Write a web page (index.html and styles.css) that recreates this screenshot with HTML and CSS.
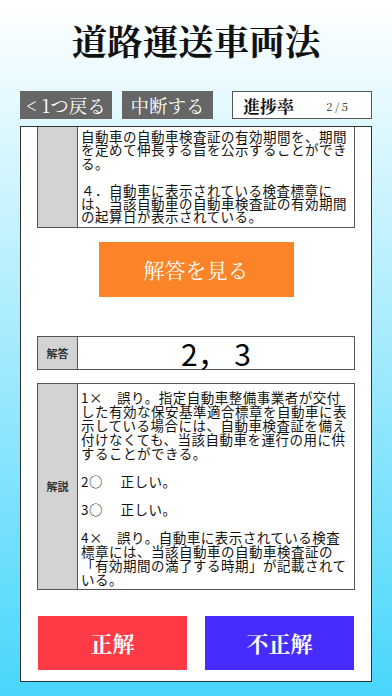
FILE: index.html
```html
<!DOCTYPE html>
<html lang="ja">
<head>
<meta charset="utf-8">
<title>道路運送車両法</title>
<link rel="stylesheet" href="styles.css">
</head>
<body>
<div class="screen">
  <header class="title-bar">
    <h1 class="title">道路運送車両法</h1>
  </header>

  <nav class="toolbar">
    <button class="tool-btn back">&lt; 1つ戻る</button>
    <button class="tool-btn pause">中断する</button>
    <div class="progress">
      <span class="progress-label">進捗率</span>
      <span class="progress-count">2 / 5</span>
    </div>
  </nav>

  <main class="panel">
    <section class="box question">
      <div class="box-label"></div>
      <div class="box-body q-text">
        <div class="ln">自動車の自動車検査証の有効期間を、期間</div>
        <div class="ln">を定めて伸長する旨を公示することができ</div>
        <div class="ln">る。</div>
        <div class="ln"></div>
        <div class="ln">４．自動車に表示されている検査標章に</div>
        <div class="ln">は、当該自動車の自動車検査証の有効期間</div>
        <div class="ln">の起算日が表示されている。</div>
      </div>
    </section>

    <div class="reveal-row">
      <button class="reveal">解答を見る</button>
    </div>

    <section class="box answer">
      <div class="box-label"><span class="label-text">解答</span></div>
      <div class="answer-value">2，&nbsp;3</div>
    </section>

    <section class="box explain">
      <div class="box-label"><span class="label-text">解説</span></div>
      <div class="box-body e-text">
        <div class="ln">1×　誤り。指定自動車整備事業者が交付</div>
        <div class="ln">した有効な保安基準適合標章を自動車に表</div>
        <div class="ln">示している場合には、自動車検査証を備え</div>
        <div class="ln">付けなくても、当該自動車を運行の用に供</div>
        <div class="ln">することができる。</div>
        <div class="ln"></div>
        <div class="ln">2○　 正しい。</div>
        <div class="ln"></div>
        <div class="ln">3○　 正しい。</div>
        <div class="ln"></div>
        <div class="ln">4×　誤り。自動車に表示されている検査</div>
        <div class="ln">標章には、当該自動車の自動車検査証の</div>
        <div class="ln">「有効期間の満了する時期」が記載されて</div>
        <div class="ln">いる。</div>
      </div>
    </section>

    <div class="judge">
      <button class="judge-btn correct">正解</button>
      <button class="judge-btn wrong">不正解</button>
    </div>
  </main>
</div>
</body>
</html>
```

FILE: styles.css
```css
html, body {
  margin: 0;
  padding: 0;
}

body {
  width: 392px;
  height: 696px;
  overflow: hidden;
  background: linear-gradient(180deg, #ffffff 0%, #48d6fb 100%);
  font-family: "Noto Sans CJK JP", "Noto Sans", sans-serif;
  color: #111;
}

.screen {
  display: flex;
  flex-direction: column;
  height: 696px;
}

.title-bar {
  height: 80px;
  display: flex;
  align-items: center;
  justify-content: center;
}

.title {
  margin: 0;
  font-family: "Noto Serif CJK JP", "Noto Serif JP", "Liberation Serif", "Noto Sans CJK JP", serif;
  font-size: 35.5px;
  font-weight: 700;
  line-height: 1;
  color: #111;
}

.toolbar {
  margin-top: 11px;
  height: 28px;
  padding: 0 20px;
  display: flex;
  align-items: stretch;
}

.tool-btn {
  border: 0;
  padding: 0;
  margin: 0;
  background: #666666;
  color: #ffffff;
  font-family: "Noto Serif CJK JP", "Noto Serif JP", "Liberation Serif", "Noto Sans CJK JP", serif;
  font-size: 18.5px;
  line-height: 28px;
  white-space: nowrap;
}

.back {
  width: 92px;
}

.pause {
  width: 91px;
  margin-left: 10px;
}

.progress {
  width: 140px;
  margin-left: 19px;
  box-sizing: border-box;
  border: 1px solid #555;
  background: #fff;
  display: flex;
  align-items: center;
  justify-content: space-between;
  padding: 0 23px 0 10px;
  font-family: "Noto Serif CJK JP", "Noto Serif JP", "Liberation Serif", "Noto Sans CJK JP", serif;
}

.progress-label {
  font-size: 17px;
  font-weight: 700;
  color: #111;
}

.progress-count {
  font-size: 11px;
  color: #222;
  padding-top: 2px;
}

.panel {
  margin: 7px 20px 0;
  height: 556px;
  box-sizing: border-box;
  border: 1px solid #333;
  background: #ffffff;
  overflow: hidden;
  display: flex;
  flex-direction: column;
}

.box {
  margin: 0 16px;
  border: 1px solid #555;
  display: flex;
  background: #fff;
}

.box-label {
  width: 39px;
  flex: none;
  background: #d3d3d3;
  border-right: 1px solid #555;
  display: flex;
  align-items: center;
  justify-content: center;
}

.label-text {
  font-size: 11px;
  font-weight: 700;
  color: #333;
}

.box-body {
  flex: 1;
  padding-left: 3px;
  font-size: 13.5px;
  letter-spacing: 0.5px;
  white-space: nowrap;
  color: #111;
  display: flex;
  flex-direction: column;
}

.question {
  border-top: 0;
}

.q-text {
  padding-top: 3px;
  padding-bottom: 3px;
}

.q-text .ln {
  height: 13.4px;
  line-height: 13.4px;
}

.e-text {
  padding-top: 6px;
  padding-bottom: 3px;
}

.e-text .ln {
  height: 14px;
  line-height: 14px;
}

.reveal-row {
  margin-top: 14px;
  display: flex;
  justify-content: center;
}

.reveal {
  width: 195px;
  height: 55px;
  border: 0;
  padding: 0;
  background: #fb8428;
  color: #fff;
  font-family: "Noto Serif CJK JP", "Noto Serif JP", "Liberation Serif", "Noto Sans CJK JP", serif;
  font-size: 21px;
}

.answer {
  margin-top: 39px;
  height: 34px;
  box-sizing: border-box;
}

.answer-value {
  flex: 1;
  display: flex;
  align-items: center;
  justify-content: center;
  font-size: 30px;
  line-height: 1;
  color: #000;
}

.explain {
  margin-top: 13px;
}

.judge {
  margin: 26px 17px 0;
  display: flex;
  gap: 18px;
}

.judge-btn {
  flex: 1;
  height: 54px;
  border: 0;
  padding: 0;
  color: #fff;
  font-family: "Noto Serif CJK JP", "Noto Serif JP", "Liberation Serif", "Noto Sans CJK JP", serif;
  font-size: 22px;
  font-weight: 700;
}

.correct {
  background: #fd3a45;
}

.wrong {
  background: #462dfd;
}
```
